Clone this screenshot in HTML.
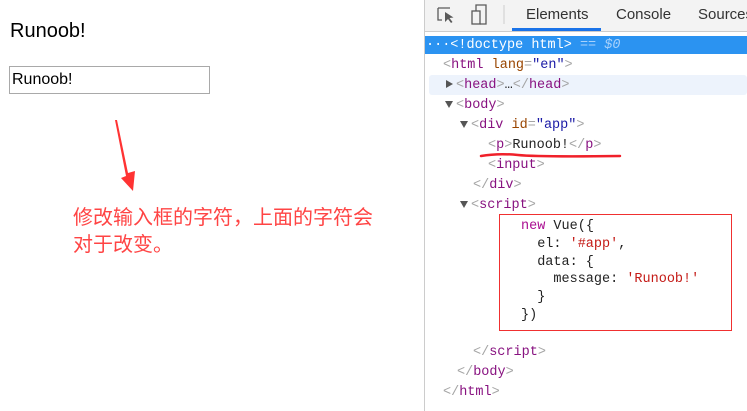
<!DOCTYPE html>
<html><head><meta charset="utf-8"><style>
body{margin:0;width:747px;height:411px;overflow:hidden;background:#fff;position:relative;font-family:"Liberation Sans",sans-serif}
.a{position:absolute}
.code{position:absolute;font-family:"Liberation Mono",monospace;font-size:13.5px;white-space:pre;line-height:18px}
.t{color:#881280}.g{color:#a5a5a5}.n{color:#994500}.v{color:#1a1aa6}.s{color:#c41a16}.k{color:#aa0d91}.b{color:#222}
.tri{display:inline-block;width:0;height:0;border-left:4.5px solid transparent;border-right:4.5px solid transparent;border-top:7px solid #555;margin-right:3px}
.trr{display:inline-block;width:0;height:0;border-top:4.5px solid transparent;border-bottom:4.5px solid transparent;border-left:7px solid #555;margin-right:3px}
</style></head><body>
<div class="a" style="left:10px;top:20px;font-size:20px;color:#000">Runoob!</div>
<div class="a" style="left:9px;top:66px;width:197px;height:26px;border:1px solid #a9a9a9;font-size:16px;line-height:26px;padding-left:2px;box-sizing:content-box">Runoob!</div>
<svg class="a" style="left:0;top:0" width="424" height="411"><polygon points="115,120 117,120 128,173 135,171 133,191 121,178 126,176" fill="#ff3333"/></svg>
<div class="a" style="left:73px;top:205px;font-size:20px;line-height:27px;color:#ff4444;font-family:'Liberation Sans','Noto Sans CJK SC',sans-serif">修改输入框的字符，上面的字符会<br>对于改变。</div>

<div class="a" style="left:424px;top:0;width:1px;height:411px;background:#ccc"></div>
<div class="a" style="left:425px;top:0;width:322px;height:31px;background:#f3f3f3;border-bottom:1px solid #ccc"></div>
<svg class="a" style="left:425px;top:0" width="100" height="31"><path d="M13 8h12M13 8v12h4" stroke="#5a5a5a" fill="none" stroke-width="1.3"/><path d="M20 12l0 10 3-3 3 4 1.5-1-3-4 4-.5z" fill="#5a5a5a"/><rect x="47" y="11" width="8" height="13" fill="none" stroke="#5a5a5a" stroke-width="1.3"/><path d="M51 11V5h10v19h-6" stroke="#5a5a5a" fill="none" stroke-width="1.3"/><path d="M79 5v19" stroke="#ccc"/></svg>
<div class="a" style="left:526px;top:6px;font-size:15px;color:#333">Elements</div>
<div class="a" style="left:512px;top:28px;width:89px;height:3px;background:#1a73e8"></div>
<div class="a" style="left:616px;top:6px;font-size:15px;color:#333">Console</div>
<div class="a" style="left:698px;top:6px;font-size:15px;color:#333">Sources</div>
<div class="a" style="left:425px;top:36px;width:322px;height:18px;background:#2b93f1"></div>
<div class="a" style="left:429px;top:75px;width:318px;height:20px;background:#edf3fc;border-radius:3px"></div>

<div class="code" style="left:426px;top:37px;color:#fff">···&lt;!doctype html&gt; <span style="color:#a8d1fb">== <i>$0</i></span></div>
<div class="code" style="left:443px;top:57px"><span class="g">&lt;</span><span class="t">html</span> <span class="n">lang</span><span class="g">=</span><span class="v">"en"</span><span class="g">&gt;</span></div>
<div class="code" style="left:446px;top:77px"><span class="trr"></span><span class="g">&lt;</span><span class="t">head</span><span class="g">&gt;</span><span class="b">…</span><span class="g">&lt;/</span><span class="t">head</span><span class="g">&gt;</span></div>
<div class="code" style="left:445px;top:97px"><span class="tri"></span><span class="g">&lt;</span><span class="t">body</span><span class="g">&gt;</span></div>
<div class="code" style="left:460px;top:117px"><span class="tri"></span><span class="g">&lt;</span><span class="t">div</span> <span class="n">id</span><span class="g">=</span><span class="v">"app"</span><span class="g">&gt;</span></div>
<div class="code" style="left:488px;top:137px"><span class="g">&lt;</span><span class="t">p</span><span class="g">&gt;</span><span class="b">Runoob!</span><span class="g">&lt;/</span><span class="t">p</span><span class="g">&gt;</span></div>
<svg class="a" style="left:478px;top:150px" width="145" height="10"><path d="M3 6Q20 3 40 5T142 6" stroke="#f0202a" stroke-width="2.5" fill="none" stroke-linecap="round"/></svg>
<div class="code" style="left:488px;top:157px"><span class="g">&lt;</span><span class="t">input</span><span class="g">&gt;</span></div>
<div class="code" style="left:473px;top:177px"><span class="g">&lt;/</span><span class="t">div</span><span class="g">&gt;</span></div>
<div class="code" style="left:460px;top:197px"><span class="tri"></span><span class="g">&lt;</span><span class="t">script</span><span class="g">&gt;</span></div>
<div class="a" style="left:499px;top:214px;width:231px;height:115px;border:1px solid #f03030"></div>
<div class="code" style="left:521px;top:218px;line-height:17.8px"><span class="k">new</span> <span class="b">Vue({</span>
<span class="b">  el: </span><span class="s">'#app'</span><span class="b">,</span>
<span class="b">  data: {</span>
<span class="b">    message: </span><span class="s">'Runoob!'</span>
<span class="b">  }</span>
<span class="b">})</span></div>
<div class="code" style="left:473px;top:344px"><span class="g">&lt;/</span><span class="t">script</span><span class="g">&gt;</span></div>
<div class="code" style="left:457px;top:364px"><span class="g">&lt;/</span><span class="t">body</span><span class="g">&gt;</span></div>
<div class="code" style="left:443px;top:384px"><span class="g">&lt;/</span><span class="t">html</span><span class="g">&gt;</span></div>
</body></html>
